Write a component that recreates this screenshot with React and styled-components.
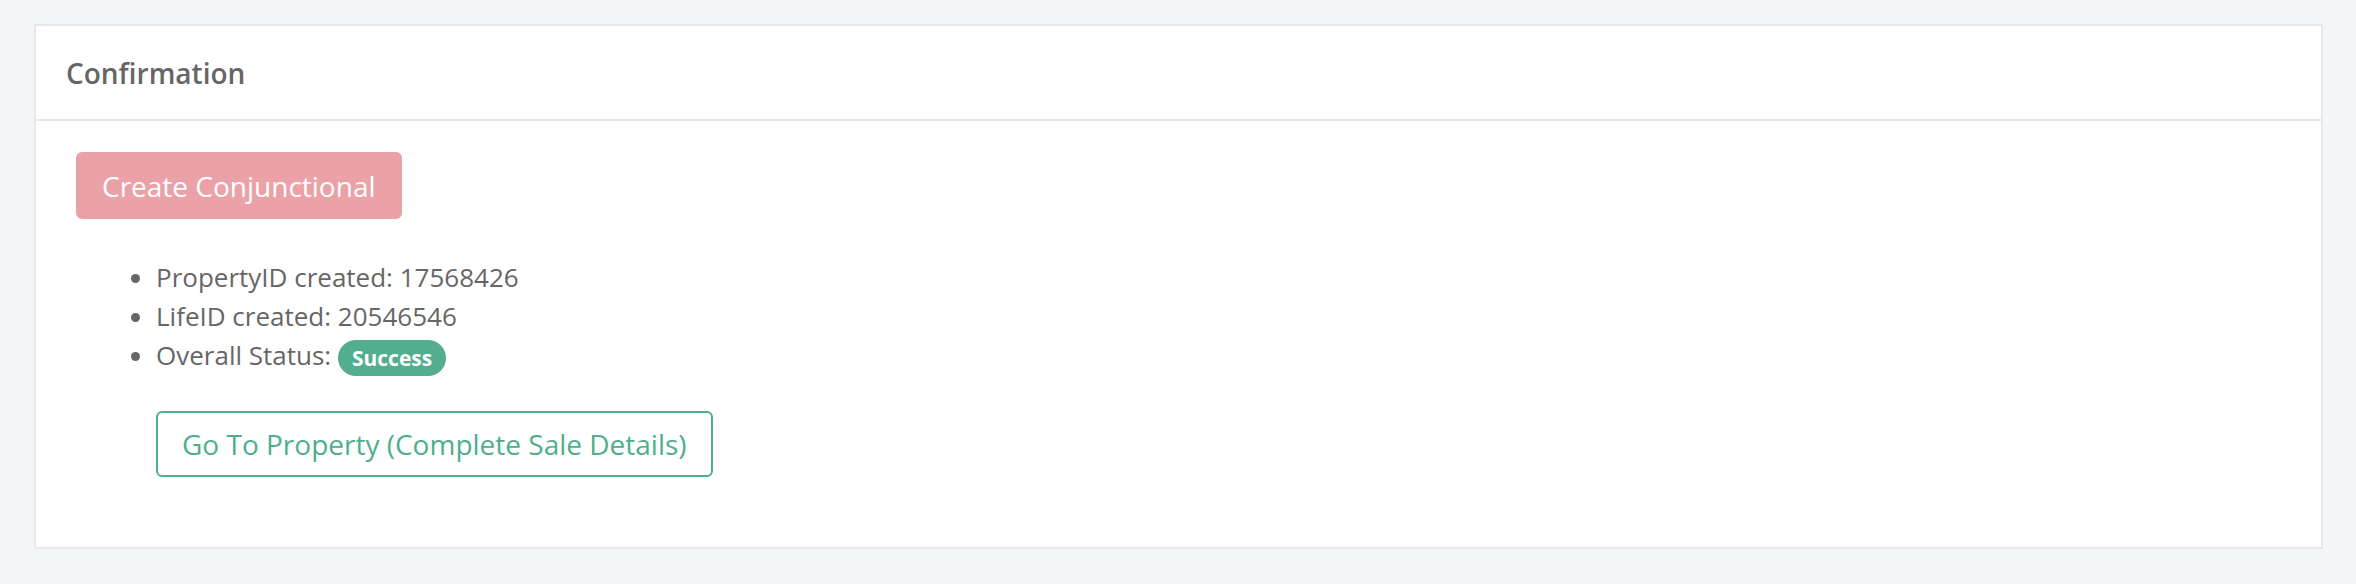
import React from 'react';
import styled, { createGlobalStyle } from 'styled-components';

const GlobalStyle = createGlobalStyle`
  html, body {
    margin: 0;
    background: #f4f5f9;
    font-family: 'Open Sans', 'Liberation Sans', sans-serif;
  }
`;

const Page = styled.div`
  padding: 24px 33px 36px 34px;
`;

const Card = styled.section`
  background: #fff;
  border: 2px solid #e6e8eb;
`;

const CardHeader = styled.header`
  display: flex;
  align-items: center;
  height: 93px;
  padding: 0 30px;
  border-bottom: 2px solid #e6e8eb;
  color: #666;
  font-size: 28px;
  font-weight: 600;
`;

const CardBody = styled.div`
  padding: 31px 40px 70px;
`;

const Button = styled.button`
  display: inline-flex;
  align-items: center;
  justify-content: center;
  font-family: inherit;
  font-size: 28px;
  border-radius: 6px;
  cursor: pointer;
  ${({ $variant }) =>
    $variant === 'outline'
      ? `
    height: 66px;
    padding: 0 24px;
    background: #fff;
    color: #4fae8c;
    border: 2px solid #4fae8c;
  `
      : `
    height: 67px;
    padding: 0 26px;
    background: #eaa2a8;
    color: #fff;
    border: none;
  `}
`;

const InfoList = styled.ul`
  margin: 39px 0 0;
  padding-left: 80px;
  color: #666;
  font-size: 26px;
  line-height: 39px;
`;

const Badge = styled.span`
  display: inline-flex;
  align-items: center;
  height: 36px;
  padding: 0 14px;
  border-radius: 18px;
  background: #52ae8f;
  color: #fff;
  font-size: 21px;
  font-weight: 700;
  vertical-align: middle;
`;

const Actions = styled.div`
  margin-top: 35px;
  padding-left: 80px;
`;

export default function App() {
  return (
    <Page>
      <GlobalStyle />
      <Card>
        <CardHeader>Confirmation</CardHeader>
        <CardBody>
          <Button type='button' disabled>
            Create Conjunctional
          </Button>
          <InfoList>
            <li>PropertyID created: 17568426</li>
            <li>LifeID created: 20546546</li>
            <li>
              Overall Status: <Badge>Success</Badge>
            </li>
          </InfoList>
          <Actions>
            <Button type='button' $variant='outline'>
              Go To Property (Complete Sale Details)
            </Button>
          </Actions>
        </CardBody>
      </Card>
    </Page>
  );
}
